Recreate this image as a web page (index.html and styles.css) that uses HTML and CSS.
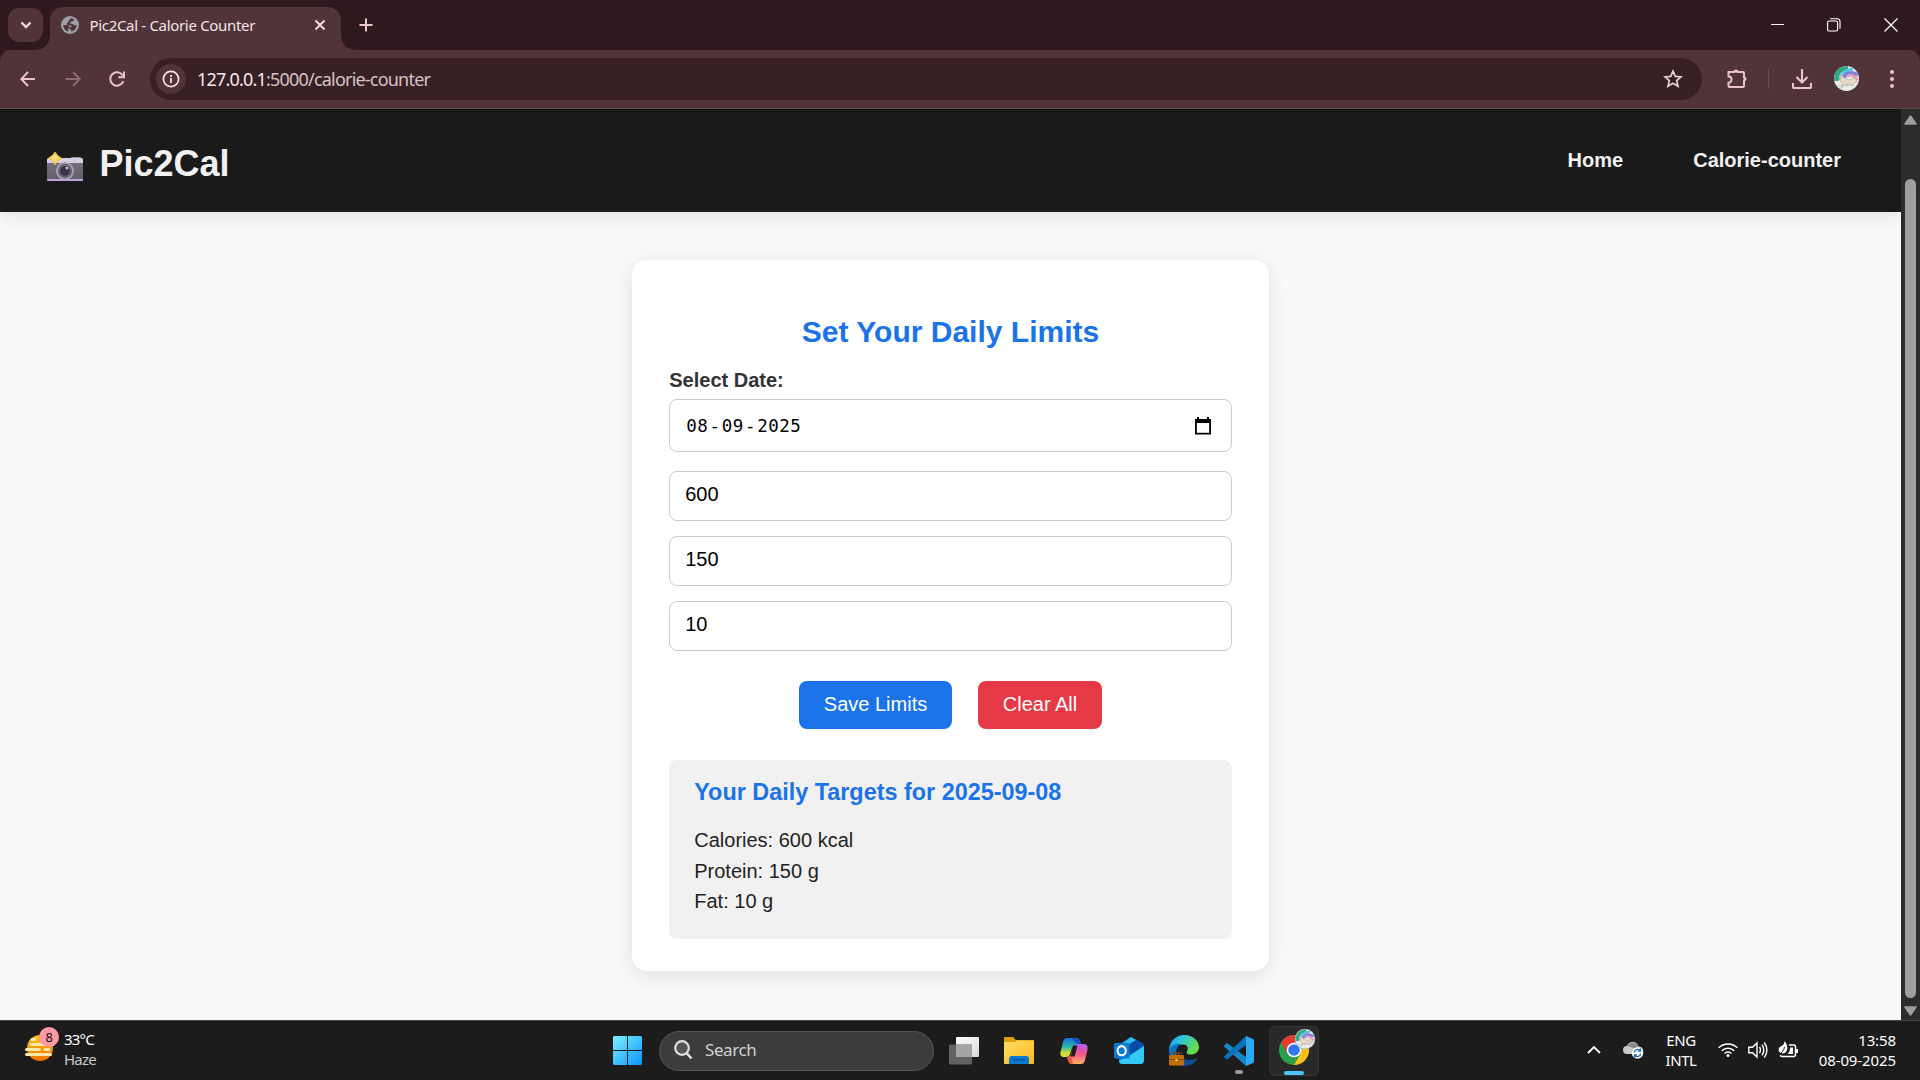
FILE: index.html
```html
<!DOCTYPE html>
<html lang="en">
<head>
<meta charset="utf-8">
<title>Pic2Cal - Calorie Counter</title>
<link rel="stylesheet" href="styles.css">
</head>
<body>
<div class="tabstrip">
  <div class="tab-menu"><svg width="12" height="8" viewBox="0 0 12 8"><path d="M1.500 1.500 6 6l4.500-4.500" fill="none" stroke="#f3dfe2" stroke-width="2.300"/></svg></div>
  <div class="tab">
    <svg width="18" height="18" viewBox="0 0 18 18"><circle cx="9" cy="9" r="9" fill="#9aa0a6"/><path d="M9.500 2.200c2 0 3.500 1 3.500 1.500 0 1.500-1.300 1.500-2.500 1.500-.4 1.300-1.800 1.200-1.900 2.400 1.500.2 3.700 0 4.100 1.700h3.100c-.3 3.300-2.600 5.600-5.700 6.300v-2.200c-1.500 0-2-.8-2-2 2-.3 2.800-1.100 2.600-2H7.500c-1 0-1.500-.6-1.700-1.500z" fill="#50343a"/><path d="M2.200 9l4 .1c1.400.5 2.400 1.300 2.300 2.500-1 .2-1.300.9-1.300 2v1.900C4.300 14.800 2.300 12.300 2.200 9z" fill="#50343a"/></svg>
    <span class="tab-title">Pic2Cal - Calorie Counter</span>
    <svg class="tab-close" width="12" height="12" viewBox="0 0 12 12"><path d="M1.500 1.500l9 9m0-9l-9 9" stroke="#f3dfe2" stroke-width="1.900"/></svg>
  </div>
  <svg class="new-tab" width="14" height="14" viewBox="0 0 14 14"><path d="M7 .5v13M.5 7h13" stroke="#efc3cb" stroke-width="2"/></svg>
  <div class="window-controls">
    <svg width="14" height="14" viewBox="0 0 14 14"><path d="M1 6.500h13" stroke="#fff"/></svg>
    <svg width="14" height="14" viewBox="0 0 14 14" fill="none" stroke="#fff" stroke-width="1.100"><rect x=".6" y="3" width="10" height="10" rx="1.500"/><path d="M3.200.8h7.300a2.500 2.500 0 0 1 2.500 2.500v7.500"/></svg>
    <svg width="14" height="14" viewBox="0 0 14 14"><path d="M.5.5l13 13m0-13l-13 13" stroke="#fff" stroke-width="1.200"/></svg>
  </div>
</div>
<div class="toolbar">
  <svg class="back" width="16" height="16" viewBox="0 0 16 16" fill="none" stroke="#efc3cb" stroke-width="2"><path d="M15 8H1.500M8 1L1.300 8 8 15"/></svg>
  <svg class="forward" width="16" height="16" viewBox="0 0 16 16" fill="none" stroke="#8e6a71" stroke-width="2"><path d="M.5 8h14M8 1l6.700 7L8 15"/></svg>
  <svg class="reload" width="16" height="16" viewBox="0 0 16 16" fill="none" stroke="#efc3cb" stroke-width="2"><path d="M14.300 10.200A6.700 6.700 0 1 1 13.700 4.500M15 .5v5.800H9.200"/></svg>
  <div class="omnibox">
    <span class="site-info"><svg width="18" height="18" viewBox="0 0 18 18"><circle cx="9" cy="9" r="7.600" fill="none" stroke="#f5e4e7" stroke-width="1.700"/><path d="M9 8v5M9 5v1.900" stroke="#f5e4e7" stroke-width="1.800"/></svg></span>
    <span class="url">127.0.0.1<span class="url-path">:5000/calorie-counter</span></span>
    <svg class="star" width="20" height="20" viewBox="0 0 20 20"><path d="M10 2.200l2.300 5.200 5.700.5-4.300 3.700 1.300 5.600-5-3-5 3 1.300-5.600L2 7.900l5.700-.5z" fill="none" stroke="#e8d0d4" stroke-width="1.700"/></svg>
  </div>
  <svg class="puzzle" width="22" height="22" viewBox="0 0 22 22"><path d="M2.500 4h5.700a2 2 0 0 1 3.600 0H17q1 0 1 1v4.200a2 2 0 0 1 0 3.600V18q0 1-1 1H3.500q-1 0-1-1v-3.300a3 3 0 0 0 0-6.200V4z" fill="none" stroke="#efc3cb" stroke-width="2"/><path d="M8 4a2 2 0 0 1 4 0zM18 9a2 2 0 0 1 0 4z" fill="#efc3cb" stroke="#efc3cb"/></svg>
  <span class="divider"></span>
  <svg class="download" width="20" height="20" viewBox="0 0 20 20" fill="none" stroke="#efc3cb" stroke-width="2.100"><path d="M10 0v13M4.500 8l5.500 5.500L15.500 8M1 14v4q0 1 1 1h16q1 0 1-1v-4"/></svg>
  <svg class="avatar" width="25" height="25" viewBox="0 0 25 25"><defs><clipPath id="round"><circle cx="12.500" cy="12.500" r="12.500"/></clipPath><g id="unicorn" clip-path="url(#round)"><path fill="#e7eceb" d="M0 0h25v25H0z"/><path d="M2 15C2 7 6 2 14 1" fill="none" stroke="#35aa82" stroke-width="5"/><path d="M6 14C7 8 11 4 19 3" fill="none" stroke="#57c5e8" stroke-width="3"/><path d="M10 12C11 7 16 5 24 9" fill="none" stroke="#7e83dc" stroke-width="3.500"/><path d="M13 11c2-3 7-2 11 3" fill="none" stroke="#e99ab5" stroke-width="2.500"/><path d="M7 8l3 4 5 2 6-2 2 4-3 1-1 3-3-2-5 1-4 3 2-5-3-2z" fill="#e8d8c6" stroke="#b9a895" stroke-width=".6"/><path d="M3 20l17-1" stroke="#bfc9cc" stroke-width="1"/></g></defs><use href="#unicorn"/></svg>
  <svg class="menu" width="4" height="18" viewBox="0 0 4 18" fill="#efc3cb"><circle cx="2" cy="2" r="2"/><circle cx="2" cy="9" r="2"/><circle cx="2" cy="16" r="2"/></svg>
</div>
<div class="viewport">
  <div class="page">
    <header class="site-header">
      <svg class="camera" width="36" height="30" viewBox="0 0 36 30"><defs><linearGradient id="cam" x2="0" y2="1"><stop stop-color="#77737c"/><stop offset="1" stop-color="#625d69"/></linearGradient></defs><path d="M24 6q0-1 1-1h7q3 0 3 3" fill="#9b96a3"/><rect y="6" width="36" height="23" rx="2" fill="url(#cam)"/><path d="M0 11V8q0-2 2-2h32q2 0 2 2v3z" fill="#d8d0e2"/><path d="M0 27h36v1q0 1-1 1H1q-1 0-1-1z" fill="#bfa0dc"/><circle cx="18" cy="19" r="9" fill="#aaa3b2"/><circle cx="18" cy="19" r="7.200" fill="#68606f"/><circle cx="18" cy="19" r="4.800" fill="#3d3148"/><circle cx="20" cy="16" r="1.500" fill="#c9bdd2"/><path d="M8 .5q2 3.700 5.700 5.700Q10 8 8 11.900 6 8 2.300 6.200 6 4.200 8 .5z" fill="#f9dc7a" stroke="#f4c64d" stroke-width="1.400"/></svg>
      <span class="brand">Pic2Cal</span>
      <nav class="nav"><a>Home</a><a>Calorie-counter</a></nav>
    </header>
    <main class="card">
      <h2>Set Your Daily Limits</h2>
      <label>Select Date:</label>
      <div class="field date"><span>08</span><span class="dash">-</span><span>09</span><span class="dash">-</span><span>2025</span>
        <svg width="16" height="18" viewBox="0 0 16 18"><path d="M0 2h16v15.500H0z"/><path d="M3 0v3M13 0v3" stroke="#000" stroke-width="2"/><path d="M1.800 6h12.400v9.800H1.800z" fill="#fff"/></svg>
      </div>
      <div class="field">600</div>
      <div class="field">150</div>
      <div class="field">10</div>
      <div class="actions"><button class="save">Save Limits</button><button class="clear">Clear All</button></div>
      <section class="targets">
        <h3>Your Daily Targets for 2025-09-08</h3>
        <p>Calories: 600 kcal</p>
        <p>Protein: 150 g</p>
        <p>Fat: 10 g</p>
      </section>
    </main>
  </div>
  <div class="scrollbar">
    <svg width="13" height="10" viewBox="0 0 13 10"><path d="M6.500 1L12 9H1z" fill="#9f9f9f" stroke="#9f9f9f" stroke-width="1.500" stroke-linejoin="round"/></svg>
    <span class="thumb"></span>
    <svg width="13" height="10" viewBox="0 0 13 10"><path d="M6.500 9L12 1H1z" fill="#9f9f9f" stroke="#9f9f9f" stroke-width="1.500" stroke-linejoin="round"/></svg>
  </div>
</div>
<footer class="taskbar">
  <div class="weather">
    <div class="weather-icon">
      <svg width="30" height="28" viewBox="0 0 30 28"><defs><linearGradient id="sun" x2="0" y2="1"><stop stop-color="#ffc400"/><stop offset="1" stop-color="#ef7200"/></linearGradient></defs><circle cx="15" cy="14" r="13" fill="url(#sun)"/><g stroke="#ffe9ae" stroke-width="3" stroke-linecap="round"><path d="M7 5.500h3M6 10.500h22M1.500 15.500h13M20 15.500h4M1.500 20.500h24"/></g></svg>
      <span class="badge">8</span>
    </div>
    <div><div class="temp">33°C</div><div class="haze">Haze</div></div>
  </div>
  <div class="dock">
    <svg class="start" width="29" height="29" viewBox="0 0 29 29"><defs><linearGradient id="win" x2="1" y2="1"><stop stop-color="#7ff0ff"/><stop offset="1" stop-color="#0a94fb"/></linearGradient></defs><path d="M1 0h13v14H0V1zM15 0h13l1 1v13H15zM0 15h14v14H1l-1-1zM15 15h14v13l-1 1H15z" fill="url(#win)"/></svg>
    <div class="search"><svg width="19" height="20" viewBox="0 0 19 20" fill="none" stroke="#dde1e3" stroke-width="2.200"><circle cx="8" cy="8" r="6.800" fill="#555"/><path d="M12.500 13l5 5.500" stroke-width="2.600"/></svg><span>Search</span></div>
    <div class="app"><svg width="30" height="28" viewBox="0 0 30 28"><defs><linearGradient id="tv" x2="1" y2="1"><stop stop-color="#fff"/><stop offset="1" stop-color="#dadada"/></linearGradient></defs><rect x="7" width="23" height="20" rx="1" fill="url(#tv)"/><rect y="7.500" width="23" height="20" rx="1" fill="#626262"/><path d="M7 7.500h16V20H7z" fill="#a5a5a5"/></svg></div>
    <div class="app"><svg width="30" height="27" viewBox="0 0 30 27"><defs><linearGradient id="fold" x2="1" y2="1"><stop stop-color="#ffdc68"/><stop offset="1" stop-color="#fdb91d"/></linearGradient></defs><path d="M0 1q0-1 1-1h8l3 3h17q1 0 1 1v6H0z" fill="#dda000"/><path d="M0 5h11l2-1.500h16q1 0 1 1V26q0 1-1 1H1q-1 0-1-1z" fill="url(#fold)"/><path d="M5 27v-5q0-3 3-3h14q3 0 3 3v5z" fill="#0a7ad0"/><path d="M8.500 22.700h13" stroke="#075092" stroke-width="1.300"/></svg></div>
    <div class="app"><svg width="28" height="26" viewBox="0 0 28 26"><defs><linearGradient id="cpa" x2="0" y2="1"><stop stop-color="#176ddd"/><stop offset=".45" stop-color="#21b7a9"/><stop offset=".8" stop-color="#d8dc32"/></linearGradient><linearGradient id="cpb" x2="0" y2="1"><stop stop-color="#b65cf2"/><stop offset=".5" stop-color="#f65588"/><stop offset="1" stop-color="#ffb266"/></linearGradient></defs><path d="M7 0h9q3 0 4 3l1 4h-6q-2 0-3 3l-2 6q-1 3-3 3H4c-3 0-4-2-3.500-5L3 4q1-4 4-4z" fill="url(#cpa)"/><path d="M21 26h-9q-3 0-4-4l-1-3q3 0 4-3l2-6q1-4 4-4h7c3 0 4 2 3.500 6L25 22q-1 4-4 4z" fill="url(#cpb)"/><path d="M12 0h4q3 0 4 3l1 3h-3q-2 0-3-2z" fill="#174ec5"/><path d="M7 19h3q1.500 0 2 2l1 5q-4 0-5-4z" fill="#ef5548"/><path d="M13.500 7.500h4l-3 11h-4z" fill="#1c1c1c"/></svg></div>
    <div class="app"><svg width="30" height="27" viewBox="0 0 30 27"><path d="M4 8L17 0l11 6q2 1 2 3v14q0 4-4 4H9q-4 0-4-4z" fill="#147cc9"/><path d="M10 8L21 2l7 4q2 1 2 3l-14 9z" fill="#064ba5"/><path d="M5 9L17 0l5 3-13 8z" fill="#36b9ef"/><path d="M30 9v14q0 4-4 4H9q-4 0-4-3l13-7z" fill="#35c7f5"/><rect y="6" width="15.500" height="15.500" rx="1.500" fill="#087bd3"/><ellipse cx="7.700" cy="13.700" rx="4.100" ry="4.600" fill="none" stroke="#fff" stroke-width="2.100"/></svg></div>
    <div class="app"><svg width="30" height="31" viewBox="0 0 30 31"><defs><linearGradient id="edge" x2="1" y2=".5"><stop stop-color="#148bd8"/><stop offset=".4" stop-color="#2dc3df"/><stop offset="1" stop-color="#67dd48"/></linearGradient></defs><path d="M0 16C0 6 7 0 15 0c9 0 15 6 15 12 0 5-4 7.500-8 7.500-4 0-5-1.500-4-3 2-4 0-7-4-7C6 9.500 0 16 0 16z" fill="url(#edge)"/><path d="M0 15c2-5 7-7 12-6-5 3-7 9-2 15 5 5 11 4 18 0-3 5-8 6.500-13 6.500C6 30.500 0 24 0 15z" fill="#0b73c5"/><path d="M12 14c-2 9 7 14 16 9-2 5-7 7.500-13 7.500z" fill="#114f94"/><rect y="20" width="15" height="10.500" rx="1" fill="#c36d0c"/><path d="M5 20v-2h5v2" fill="none" stroke="#8b4805" stroke-width="1.500"/><path d="M0 24.500h15" stroke="#874408"/><circle cx="7.500" cy="25" r="1.200" fill="#ffd34d"/></svg></div>
    <div class="app running"><svg width="30" height="30" viewBox="0 0 30 30"><path d="M0 9.500L3 7l19 14v9L0 10.500z" fill="#1484cb"/><path d="M0 20.500L22 0v9L3 23.500 0 21z" fill="#0872b8"/><path d="M22 0l7 3q1 .5 1 1.500v21q0 1-1 1.500l-7 3z" fill="#2aaaf2"/></svg></div>
    <div class="app active"><svg width="37" height="37" viewBox="0 0 37 37"><g transform="translate(0 6)"><circle cx="15" cy="15" r="15" fill="#2a9e4b"/><path d="M15 15L2 7.500A15 15 0 0 1 28 7.500z" fill="#e33b2e"/><path d="M15 7.500h13A15 15 0 0 1 15 30l6.500-11.200z" fill="#fbc116"/><path d="M2 7.500l6.500 11.300L15 7.500z" fill="#e33b2e"/><circle cx="15" cy="15" r="7.300" fill="#fff"/><circle cx="15" cy="15" r="5.800" fill="#3079ee"/></g><circle cx="26" cy="10" r="10.300" fill="#a9abab"/><g transform="translate(16.400 .4) scale(.77)"><use href="#unicorn"/></g></svg></div>
  </div>
  <div class="tray">
    <svg class="chevron" width="14" height="8" viewBox="0 0 14 8"><path d="M1 7l6-6 6 6" fill="none" stroke="#fff" stroke-width="1.800"/></svg>
    <svg class="cloud" width="21" height="18" viewBox="0 0 21 18"><path d="M4 13a4 4 0 0 1 0-8A6 6 0 0 1 15.500 5.500 4 4 0 0 1 18 13z" fill="#c9c9c9"/><path d="M4.500 5A6 6 0 0 1 15.500 5.500l-4 2z" fill="#8b8b8b"/><circle cx="14.500" cy="12" r="5.800" fill="#fff"/><path d="M11.300 11.500a3.400 3.400 0 0 1 6-1.800M17.700 12.500a3.400 3.400 0 0 1-6 1.800M17.500 7.500v2.600H15M11.500 16.500v-2.600H14" fill="none" stroke="#1769b8" stroke-width="1.300"/></svg>
    <div class="lang"><div>ENG</div><div>INTL</div></div>
    <svg class="wifi" width="20" height="16" viewBox="0 0 20 16" fill="none" stroke="#fff" stroke-width="1.500"><path d="M.7 5.800a13.200 13.200 0 0 1 18.600 0M3.800 8.700a8.800 8.800 0 0 1 12.400 0M6.600 11.500a4.800 4.800 0 0 1 6.800 0"/><circle cx="10" cy="13.500" r="1.500" fill="#fff" stroke="none"/></svg>
    <svg class="speaker" width="20" height="18" viewBox="0 0 20 18" fill="none" stroke="#fff" stroke-width="1.400"><path d="M.8 6.300h3.700L9 2v14l-4.500-4.300H.8zM11.500 6q2 3 0 6M14 3.700q3.700 5.300 0 10.600M16.300 1.500q5.200 7.500 0 15"/></svg>
    <svg class="battery" width="20" height="18" viewBox="0 0 20 18"><path d="M11 4h4.500q2 0 2 2v7.500q0 2-2 2H5q-2 0-3-1" fill="none" stroke="#fff" stroke-width="1.500"/><path d="M18 8h2v4h-2zM9.500 13H15V6.500h-3Q12 11 9.500 13zM6.500 0C11 5 10 12 5 12.500-1 12 0 6 3.500 5c2-1 3-2.500 3-5z" fill="#fff"/><path d="M1 13.500C4 12 6 9 6.500 6" stroke="#1c1c1c" fill="none"/></svg>
    <div class="clock"><div>13:58</div><div class="day">08-09-2025</div></div>
  </div>
</footer>
</body>
</html>
```

FILE: styles.css
```css
* { box-sizing: border-box; }
body { margin: 0; width: 1920px; height: 1080px; overflow: hidden; display: flex; flex-direction: column; background: #2f191e; font-family: "Noto Sans", sans-serif; }
svg { display: block; flex: none; }

/* browser tab strip */
.tabstrip { height: 50px; flex: none; display: flex; align-items: center; padding-left: 8px; }
.tab-menu { width: 35px; height: 34px; border-radius: 11px; background: #50343a; display: flex; align-items: center; justify-content: center; }
.tab { position: relative; width: 291px; height: 43px; margin: 7px 0 0 7px; padding: 0 15px 7px 11px; border-radius: 13px 13px 0 0; background: #50343a; display: flex; align-items: center; }
.tab::before, .tab::after { content: ""; position: absolute; bottom: 0; width: 14px; height: 14px; }
.tab::before { left: -14px; background: radial-gradient(circle at 0 0, transparent 13.5px, #50343a 14px); }
.tab::after { right: -14px; background: radial-gradient(circle at 100% 0, transparent 13.5px, #50343a 14px); }
.tab-title { margin-left: 10.5px; font-size: 15px; letter-spacing: -0.32px; color: #f5e4e7; white-space: nowrap; }
.tab-close { margin-left: auto; }
.new-tab { margin-left: 18px; }
.window-controls { margin-left: auto; margin-right: 22px; display: flex; gap: 43px; }

/* toolbar */
.toolbar { height: 59px; flex: none; display: flex; align-items: center; padding: 0 26px 1px 20px; background: #50343a; border-bottom: 1px solid #5a484b; border-radius: 11px 11px 0 0; }
.forward { margin-left: 29px; }
.reload { margin-left: 28px; }
.omnibox { flex: none; width: 1552px; height: 42px; margin-left: 25px; padding: 0 19.5px 0 6px; border-radius: 21px; background: #381f24; display: flex; align-items: center; }
.site-info { width: 30px; height: 30px; border-radius: 50%; background: #50343a; display: flex; align-items: center; justify-content: center; }
.url { margin-left: 11px; font-size: 18px; letter-spacing: -0.8px; color: #f7e9eb; }
.url-path { color: #d7c2c5; }
.star { margin-left: auto; }
.puzzle { margin-left: 24px; }
.divider { width: 2px; height: 20px; margin-left: 20px; background: #6d4c53; }
.download { margin-left: 22.5px; }
.avatar { margin-left: 22.5px; }
.menu { margin-left: 31px; }

/* web page */
.viewport { height: 911px; flex: none; display: flex; background: #f9f9f9; font-family: "Liberation Sans", Arial, sans-serif; }
.page { width: 1901px; overflow: hidden; font-size: 20px; color: #222; }
.site-header { height: 103px; padding: 0 60px 0 47px; display: flex; align-items: center; background: #1a1a1a; box-shadow: 0 4px 15px rgba(0, 0, 0, .1); }
.camera { margin-top: 13px; }
.brand { margin: 7px 0 0 16.5px; font-size: 36px; font-weight: bold; color: #f1f1f1; }
.nav { margin-left: auto; display: flex; gap: 70px; font-weight: bold; color: #f1f1f1; }
.card { width: 637.5px; height: 711px; margin: 48px auto 0; padding: 54px 37.5px 0; border-radius: 15px; background: #fff; box-shadow: 0 5px 19px rgba(0, 0, 0, .1); }
.card h2 { margin: 0; line-height: 36px; font-size: 30px; text-align: center; color: #1a73e8; }
.card label { display: block; margin-top: 18px; line-height: 24px; font-weight: bold; color: #333; }
.field { height: 50px; margin-bottom: 15px; padding: 0 15px 3px; border: 1px solid #ccc; border-radius: 8px; display: flex; align-items: center; color: #000; }
.date { height: 53px; margin: 7px 0 19px; padding: 0 20px 0 16px; font-family: "DejaVu Sans Mono", monospace; font-size: 17.5px; }
.date span { letter-spacing: .45px; }
.date .dash { width: 13.5px; text-align: center; }
.date svg { margin-left: auto; }
.actions { margin-top: 30px; display: flex; justify-content: center; gap: 26px; }
.actions button { height: 48px; padding: 0 0 2px; border: 0; border-radius: 8px; color: #fff; font: 20px "Liberation Sans", Arial, sans-serif; }
.save { width: 153px; background: #1a73e8; }
.clear { width: 124px; background: #e63946; }
.targets { height: 179px; margin-top: 31px; padding: 17px 25px; border-radius: 8px; background: #f1f1f1; }
.targets h3 { margin: 0 0 18px; font-size: 23.4px; line-height: 30px; color: #1a73e8; }
.targets p { margin: 0; line-height: 30.6px; }
.scrollbar { width: 19px; padding: 6px 0 4px; display: flex; flex-direction: column; align-items: center; background: #2c2c2c; }
.thumb { width: 11px; height: 819px; margin: 54px 0 auto; border-radius: 6px; background: #9f9f9f; }

/* taskbar */
.taskbar { height: 60px; flex: none; display: flex; border-top: 1px solid #464646; background: #1c1c1c; color: #fff; font-size: 15px; line-height: 20px; letter-spacing: -0.4px; }
.weather { width: 611px; display: flex; padding: 8px 0 0 25px; }
.temp, .haze { letter-spacing: -0.8px; }
.weather-icon { position: relative; width: 30px; margin-right: 9px; padding-top: 5px; }
.badge { position: absolute; left: 14px; top: -2px; width: 20px; height: 20px; border-radius: 50%; background: #ff99a4; color: #111; font-size: 13px; text-align: center; }
.haze { color: #c8c8c8; }
.dock { display: flex; align-items: center; padding-left: 2px; }
.search { width: 275px; height: 40px; margin: 0 2.5px 0 17px; padding: 0 0 1px 14px; border: 1px solid #555; border-radius: 20px; background: #3c3c3c; display: flex; align-items: center; gap: 12px; font-size: 17px; color: #d2d2d2; }
.app { position: relative; width: 55px; height: 59px; display: flex; align-items: center; justify-content: center; }
.running::after, .active::after { content: ""; position: absolute; bottom: 6px; width: 8px; height: 4px; border-radius: 2px; background: #999; }
.active { width: 50px; height: 50px; margin-left: 2.5px; border: 1px solid #353535; border-radius: 6px; background: #292929; padding-bottom: 6px; }
.active svg { margin-left: 6px; }
.active::after { bottom: 0; width: 20px; background: #4cc2ff; }
.tray { flex: 1; display: flex; align-items: center; padding: 0 24px 2px 0; }
.chevron { margin-left: auto; }
.cloud { margin-left: 22px; }
.lang { width: 42px; margin-left: 16px; text-align: center; }
.wifi { margin-left: 16px; }
.speaker, .battery { margin-left: 10px; }
.clock { width: 78px; margin-left: 20px; text-align: right; white-space: nowrap; letter-spacing: -0.1px; }
```
